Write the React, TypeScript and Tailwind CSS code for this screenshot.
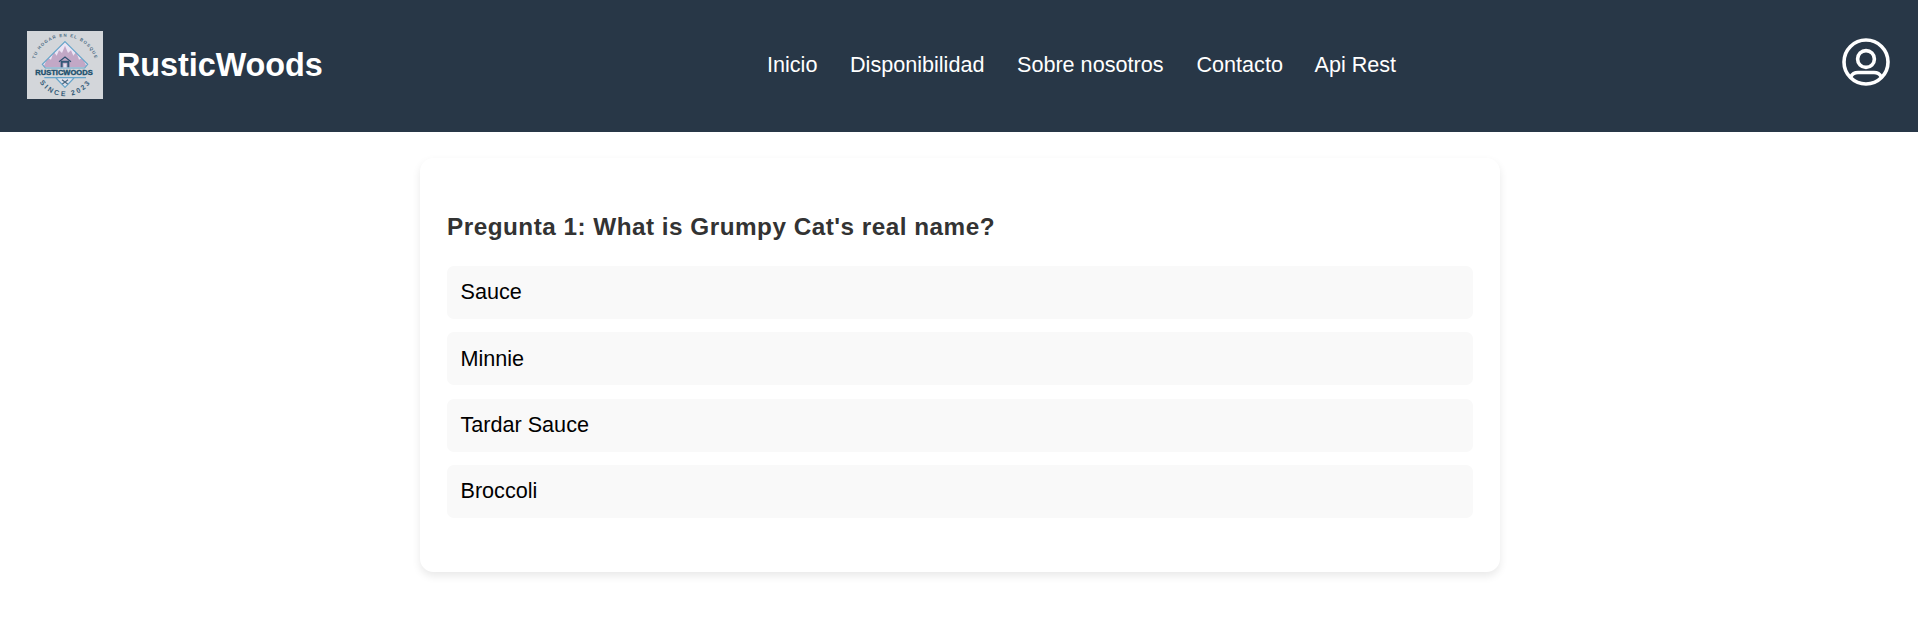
function Logo() {
  return (
    <svg viewBox="0 0 228 204" className="-mt-0.5 h-[68px] w-[76px] shrink-0" role="img" aria-label="RusticWoods logo">
      <defs>
        <path id="arc-top" d="M24 84 A 94 94 0 0 1 204 84" />
        <path id="arc-bottom" d="M38 154 A 91 91 0 0 0 191 154" />
        <clipPath id="diamond-top">
          <path d="M114 33 L181 100 L173 109 H55 L47 100 Z" />
        </clipPath>
      </defs>
      <rect width="228" height="204" fill="#d3d6da" />
      <path d="M114 33 L181 100 L173 109 H55 L47 100 Z" fill="#ece4f4" />
      <g clipPath="url(#diamond-top)" fill="#c2a8c6">
        <path d="M48 111 L62 80 L72 86 L80 62 L89 74 L96 58 L105 66 L114 44 L123 66 L132 58 L139 74 L148 62 L156 86 L166 80 L181 111 Z" />
      </g>
      <path d="M114 32 L182 100 L173 111 H55 L46 100 Z" fill="none" stroke="#66a5ca" strokeWidth="3.5" />
      <path d="M101 89 H127 V109 H121 V95 H107 V109 H101 Z" fill="#345877" />
      <path d="M96 92 L114 78 L132 92" fill="none" stroke="#2e5272" strokeWidth="3.5" />
      <path d="M110 98 H118 V109 H110 Z" fill="#dfe1ec" />
      <path d="M87 141 L114 169 L141 141 Z" fill="#e0e2ec" />
      <path d="M52 140 H177 M87 141 L114 169 L141 141" fill="none" stroke="#66a5ca" strokeWidth="3.5" />
      <path d="M105 146 L122 159 M123 146 L106 159" stroke="#486782" strokeWidth="3.5" />
      <text x="25" y="132" textLength="172" lengthAdjust="spacingAndGlyphs" className="font-['Liberation_Sans'] text-[19px] font-bold" fill="#20506d" stroke="#20506d" strokeWidth="1">
        RUSTICWOODS
      </text>
      <text className="font-['Liberation_Sans'] text-[13px] font-bold" fill="#4b6b83">
        <textPath href="#arc-top" textLength="238">TU HOGAR EN EL BOSQUE</textPath>
      </text>
      <text className="font-['Liberation_Sans'] text-[21px] font-bold" fill="#345b78">
        <textPath href="#arc-bottom" textLength="178">SINCE 2023</textPath>
      </text>
    </svg>
  );
}

function UserIcon() {
  return (
    <svg viewBox="0 0 48 48" className="size-12" fill="none" stroke="#fff" strokeWidth="3.6" aria-label="Usuario">
      <circle cx="24" cy="24" r="22" />
      <circle cx="24" cy="21" r="8.4" />
      <path d="M8.8 38.8 C10.2 36 12.5 34.5 16 34.5 H32 C35.5 34.5 37.8 36 39.2 38.8" />
    </svg>
  );
}

const links = [
  { label: "Inicio", style: "w-[50px]" },
  { label: "Disponibilidad", style: "w-[134px]" },
  { label: "Sobre nosotros", style: "w-[146.5px]" },
  { label: "Contacto", style: "w-[85px]" },
  { label: "Api Rest", style: "w-[84px]" },
];

const options = ["Sauce", "Minnie", "Tardar Sauce", "Broccoli"];

export default function App() {
  return (
    <div className="min-h-[625px] bg-white font-['Liberation_Sans',Arial,sans-serif] text-[21.6px] text-black">
      <header className="flex h-[132px] items-center justify-between bg-[#283747] pr-7 pl-[27px] text-white">
        <div className="flex w-[740px] items-center gap-[14px]">
          <Logo />
          <h1 className="-mt-0.5 text-[32.4px] font-bold tracking-[-0.06px]">RusticWoods</h1>
        </div>
        <nav className="flex flex-1 gap-[33px]">
          {links.map((link) => (
            <a key={link.label} href="#" className={`${link.style} -mt-px whitespace-nowrap`}>
              {link.label}
            </a>
          ))}
        </nav>
        <button type="button" className="-mt-2">
          <UserIcon />
        </button>
      </header>
      <main className="mt-[26px] ml-[420px] h-[414px] w-[1080px] rounded-[13.5px] bg-white px-[27px] pt-[53px] shadow-[0_4px_8px_rgba(0,0,0,0.09)]">
        <h2 className="text-[24.3px] leading-[32px] font-bold tracking-[0.49px] text-[#333]">
          Pregunta 1: What is Grumpy Cat's real name?
        </h2>
        <ul className="mt-[23px] flex flex-col gap-[13.4px]">
          {options.map((option) => (
            <li key={option} className="flex h-[53px] items-center rounded-[6.75px] bg-[#f9f9f9] px-[13.5px]">
              {option}
            </li>
          ))}
        </ul>
      </main>
    </div>
  );
}
